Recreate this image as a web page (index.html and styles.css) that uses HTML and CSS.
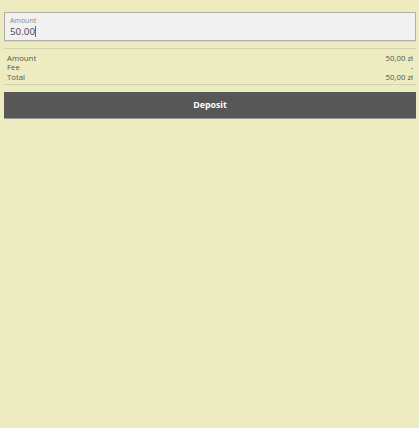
FILE: index.html
```html
<!DOCTYPE html>
<html lang="en">
<head>
  <meta charset="UTF-8" />
  <meta name="viewport" content="width=device-width, initial-scale=1.0"/>
  <title>Deposit</title>
  <link rel="stylesheet" href="styles.css">
</head>
<body>
  <main class="deposit">
    <div class="field">
      <label for="amount">Amount</label>
      <div class="value"><span id="amount">50.00</span><span class="caret"></span></div>
    </div>

    <div class="summary">
      <div class="row"><span>Amount</span><span>50,00 zł</span></div>
      <div class="row"><span>Fee</span><span>-</span></div>
      <div class="row"><span>Total</span><span>50,00 zł</span></div>
    </div>

    <button class="deposit-btn">Deposit</button>
  </main>
</body>
</html>
```

FILE: styles.css
```css
* {
  box-sizing: border-box;
  margin: 0;
  padding: 0;
}

body {
  font-family: 'Open Sans', sans-serif;
  background: #ececc0;
  color: #555;
  min-height: 100vh;
}

.deposit {
  padding: 12px 3px 0 4px;
}

.field {
  height: 29px;
  background: #f1f1f1;
  border: 1px solid #b0b0a8;
  box-shadow: 0 1px 0 #d8d8c0;
  padding: 3px 5px 0;
}

.field label {
  display: block;
  font-size: 7px;
  line-height: 9px;
  color: #8a8a8a;
}

.value {
  display: flex;
  align-items: center;
  font-size: 9.8px;
  line-height: 13px;
  color: #444;
}

.caret {
  width: 1px;
  height: 11px;
  background: #2f6fd8;
}

.summary {
  margin-top: 7px;
  border-top: 1px solid #d2d2b0;
  border-bottom: 1px solid #d2d2b0;
  padding: 5px 3px 2px 3px;
}

.row {
  display: flex;
  justify-content: space-between;
  font-size: 7.8px;
  line-height: 9.3px;
  color: #55554a;
}

.deposit-btn {
  display: block;
  width: 100%;
  height: 27px;
  margin-top: 7px;
  background: #575757;
  color: #fff;
  border: none;
  border-bottom: 1px solid #9a9a90;
  font-family: 'Open Sans', sans-serif;
  font-weight: 700;
  font-size: 8.8px;
}
```
